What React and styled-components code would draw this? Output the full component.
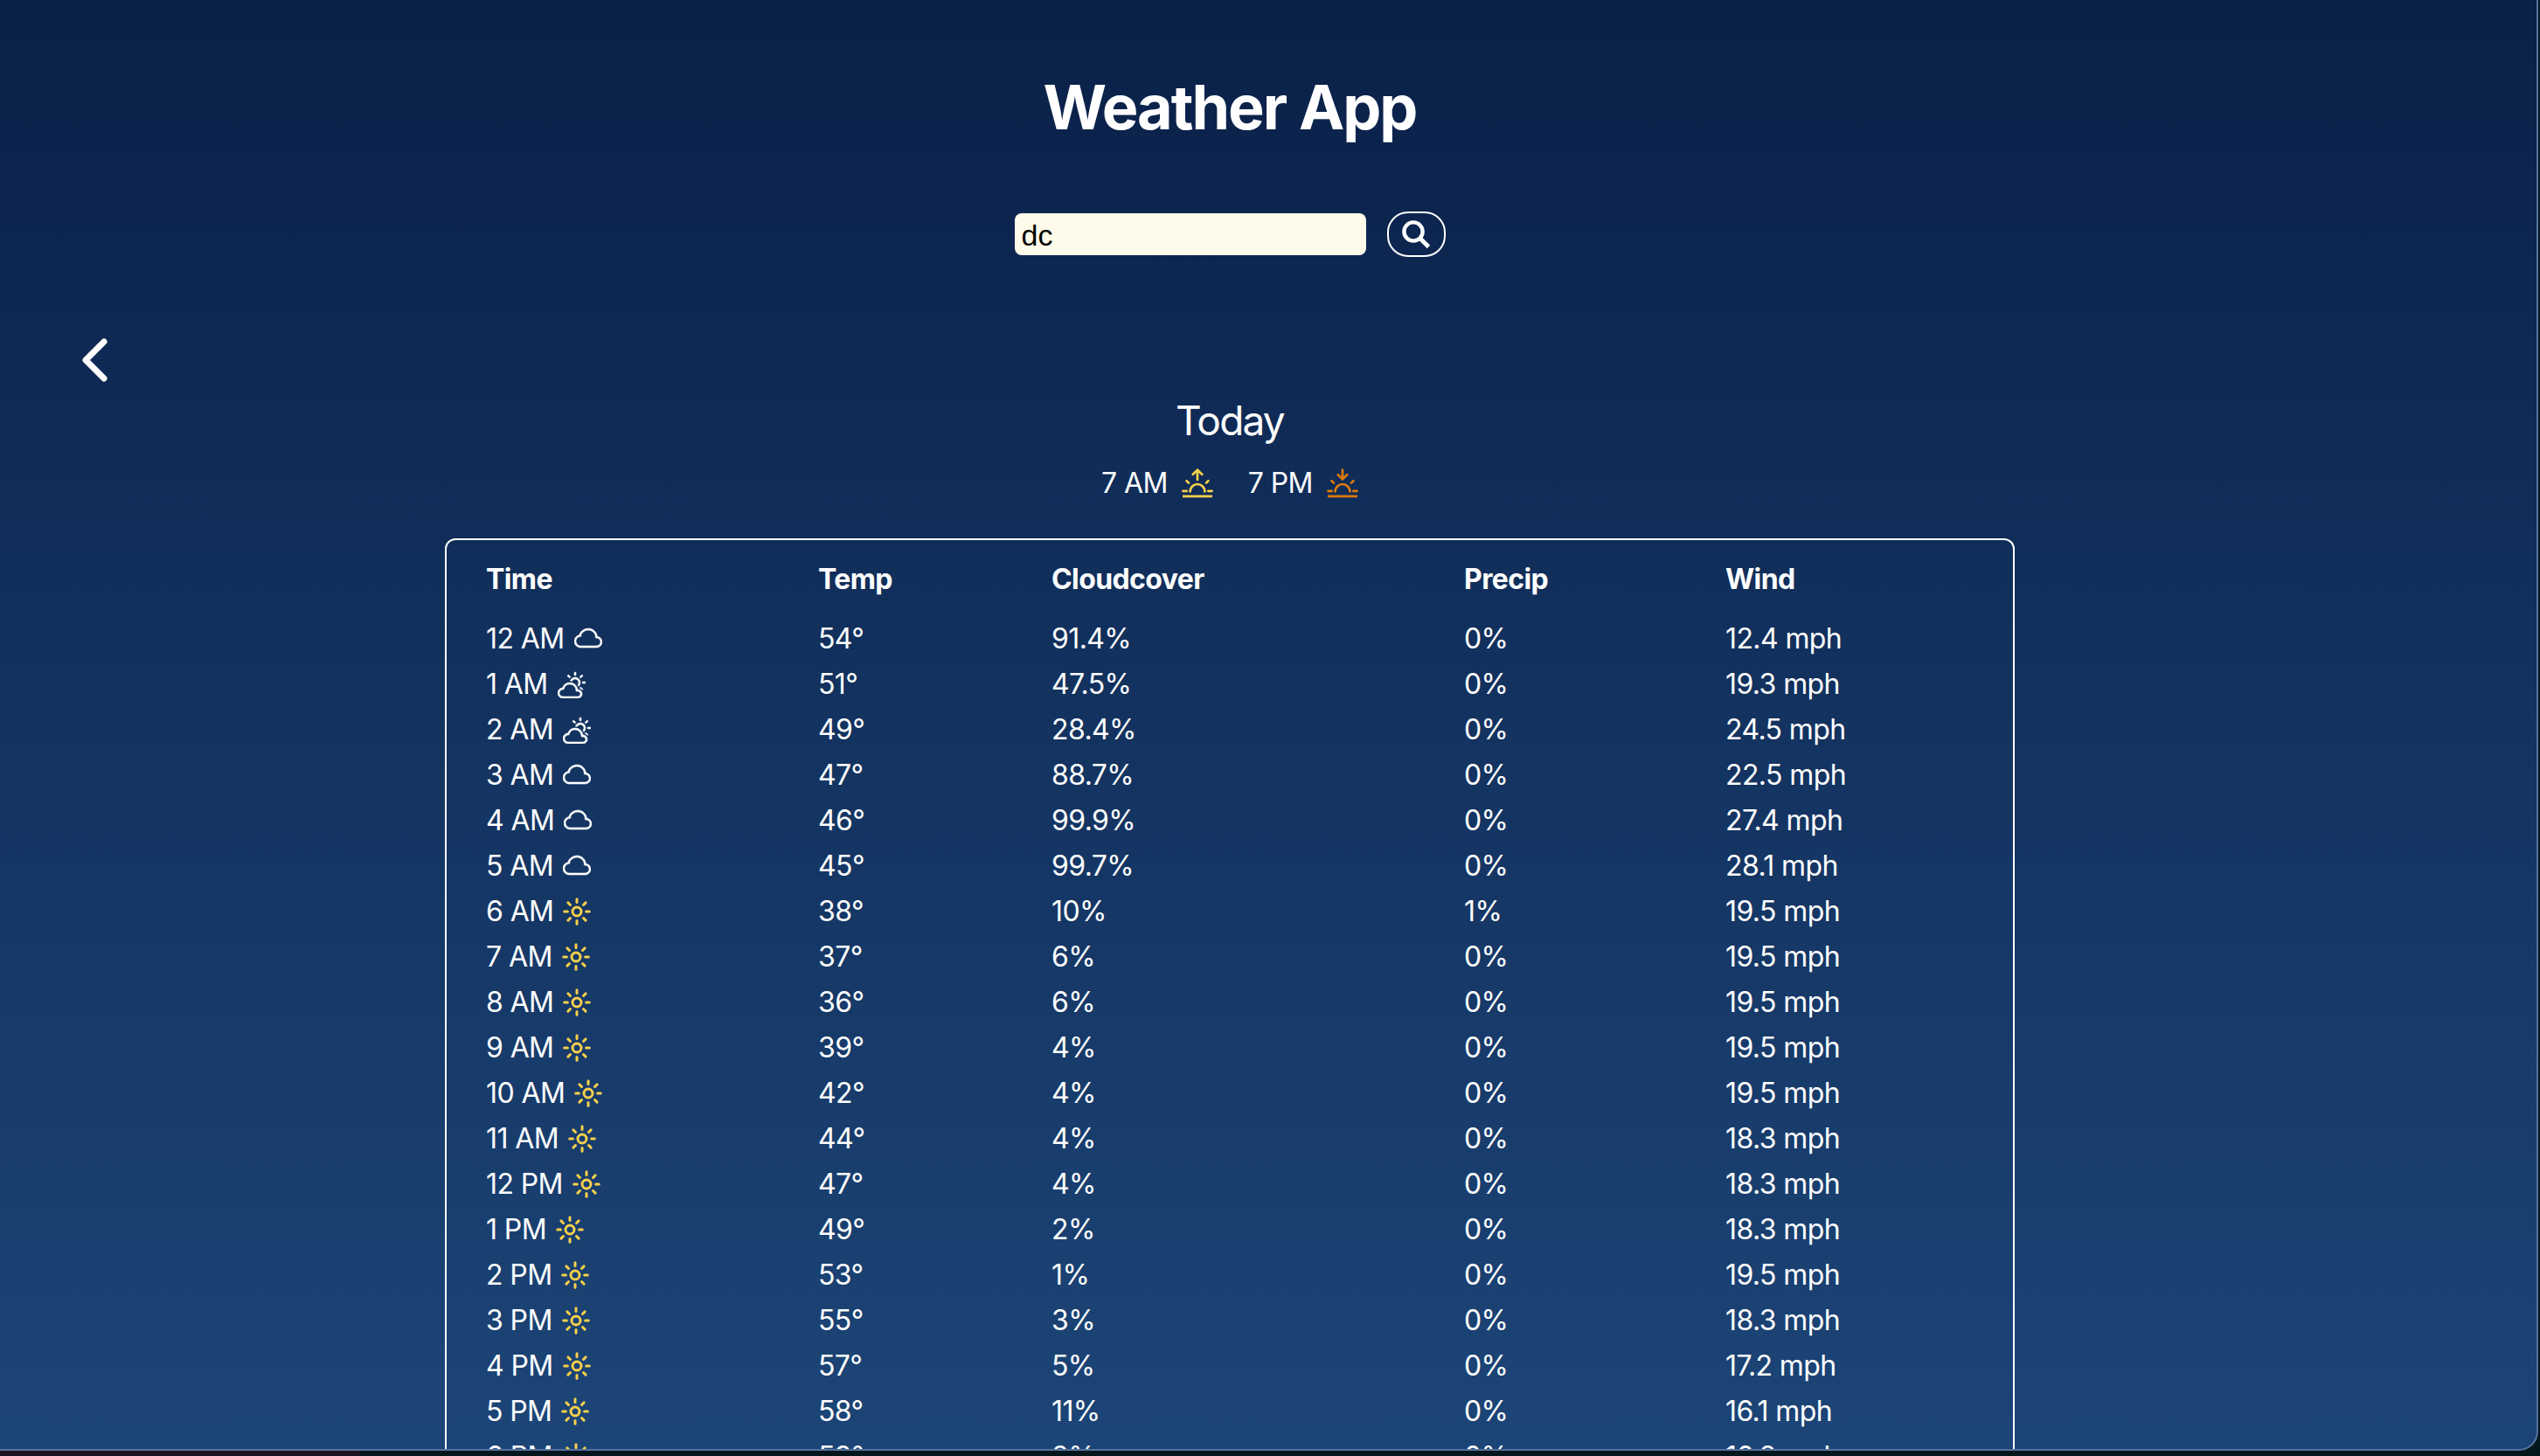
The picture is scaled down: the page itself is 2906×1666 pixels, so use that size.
import React from 'react'
import styled, { createGlobalStyle } from 'styled-components'
import { BsCloud, BsCloudSun } from 'react-icons/bs'

const GlobalStyle = createGlobalStyle`
  html, body {
    margin: 0;
    height: 100%;
    background: #02141c;
    overflow: hidden;
  }
`

const Desktop = styled.div`
  display: flex;
  flex-direction: column;
  width: 2906px;
  height: 1666px;
  background: linear-gradient(90deg, #1b1420 0, #1b1420 412px, #03161c 412px);
`

const Window = styled.div`
  box-sizing: border-box;
  width: 2904px;
  height: 1660px;
  overflow: hidden;
  color: #fff;
  font-family: Inter, "Liberation Sans", sans-serif;
  letter-spacing: -0.6px;
  background: linear-gradient(180deg, #0a2048 0, #1c4577 100%);
  border-right: 2px solid #56729f;
  border-bottom: 2px solid #56729f;
  border-radius: 0 0 22px 0;
`

const Header = styled.header`
  display: flex;
  flex-direction: column;
  align-items: center;
  padding: 81px 88px 0 0;
`

const Title = styled.h1`
  margin: 0;
  font-size: 70px;
  line-height: 84px;
  font-weight: 700;
  letter-spacing: -2px;
`

const SearchRow = styled.form`
  display: flex;
  align-items: center;
  gap: 24px;
  margin-top: 77px;
`

const SearchInput = styled.input`
  box-sizing: border-box;
  width: 402px;
  height: 48px;
  padding: 2px 8px 0;
  border: 0;
  border-radius: 8px;
  background: #fffbea;
  color: #000;
  font-family: "Liberation Sans", Arial, sans-serif;
  font-size: 34px;
`

const SearchButton = styled.button`
  display: flex;
  align-items: center;
  justify-content: center;
  box-sizing: border-box;
  width: 67px;
  height: 52px;
  padding: 0;
  border: 2px solid #fff;
  border-radius: 24px;
  background: transparent;
`

const BackButton = styled.button`
  display: block;
  margin: 90px 0 0 88px;
  padding: 0;
  width: 40px;
  height: 56px;
  border: 0;
  background: transparent;
`

const Forecast = styled.section`
  display: flex;
  flex-direction: column;
  align-items: center;
  margin-top: 13px;
  padding-right: 88px;
`

const DayName = styled.h2`
  margin: 0;
  font-size: 46px;
  line-height: 56px;
  font-weight: 400;
  letter-spacing: -1.8px;
`

const SunTimes = styled.div`
  display: flex;
  align-items: center;
  gap: 40px;
  margin-top: 24px;
  font-size: 32px;
  line-height: 40px;
`

const SunTime = styled.span`
  display: flex;
  align-items: center;
  gap: 16px;
`

const Table = styled.div`
  box-sizing: border-box;
  width: 1796px;
  margin-top: 43px;
  padding: 19px 45px 0;
  border: 2px solid #fff;
  border-radius: 12px;
`

const Row = styled.div`
  display: grid;
  grid-template-columns: 380px 267px 472px 299px 1fr;
  font-size: 32px;
  line-height: 52px;
  white-space: nowrap;
`

const HeadRow = styled(Row)`
  font-weight: 700;
  margin-bottom: 16px;
`

const TimeCell = styled.span`
  display: flex;
  align-items: center;
  gap: 11px;
`

const CloudIcon = styled.span`
  display: flex;
  color: #fff;

  svg {
    stroke: currentColor;
    stroke-width: 0.3;
  }
`

const SearchIcon = () => (
  <svg width="34" height="34" viewBox="0 0 34 34" fill="none" stroke="#fff" strokeWidth="4.4">
    <circle cx="14" cy="14" r="10.6" />
    <path d="M22 22l9.5 9.5" strokeWidth="5" />
  </svg>
)

const rayAngles = [0, 45, 90, 135, 180, 225, 270, 315]

const SunIcon = () => (
  <svg width="32" height="32" viewBox="0 0 32 32" fill="none" stroke="#f6cf4b" strokeWidth="3" strokeLinecap="round">
    <circle cx="16" cy="16" r="5" />
    {rayAngles.map(angle => (
      <line key={angle} x1="16" y1="5.4" x2="16" y2="1.7" transform={`rotate(${angle} 16 16)`} />
    ))}
  </svg>
)

const SunHorizon = ({ up, color }) => (
  <svg width="36" height="34" viewBox="0 0 36 34" fill="none" stroke={color} strokeWidth="2.7" strokeLinecap="round" strokeLinejoin="round">
    {up
      ? <path d="M18 13V1.6M12.8 6.8L18 1.6l5.2 5.2" />
      : <path d="M18 1.6V12.4M12.8 7.2l5.2 5.2 5.2-5.2" />}
    <path d="M5.6 14.2l2.4 2.4M30.4 14.2L28 16.6" />
    <path d="M9.6 26.4a8.4 8.4 0 0 1 16.8 0" />
    <path d="M1.4 25.8h4.4M30.2 25.8h4.4" />
    <path d="M1 31.8h34" strokeWidth="2.8" strokeLinecap="butt" />
  </svg>
)

const WeatherIcon = ({ kind }) => {
  if (kind === 'sun') return <SunIcon />
  const Icon = kind === 'part' ? BsCloudSun : BsCloud
  return <CloudIcon><Icon size={32} /></CloudIcon>
}

const hours = [
  ['12 AM', 'cloud', '54°', '91.4%', '0%', '12.4 mph'],
  ['1 AM', 'part', '51°', '47.5%', '0%', '19.3 mph'],
  ['2 AM', 'part', '49°', '28.4%', '0%', '24.5 mph'],
  ['3 AM', 'cloud', '47°', '88.7%', '0%', '22.5 mph'],
  ['4 AM', 'cloud', '46°', '99.9%', '0%', '27.4 mph'],
  ['5 AM', 'cloud', '45°', '99.7%', '0%', '28.1 mph'],
  ['6 AM', 'sun', '38°', '10%', '1%', '19.5 mph'],
  ['7 AM', 'sun', '37°', '6%', '0%', '19.5 mph'],
  ['8 AM', 'sun', '36°', '6%', '0%', '19.5 mph'],
  ['9 AM', 'sun', '39°', '4%', '0%', '19.5 mph'],
  ['10 AM', 'sun', '42°', '4%', '0%', '19.5 mph'],
  ['11 AM', 'sun', '44°', '4%', '0%', '18.3 mph'],
  ['12 PM', 'sun', '47°', '4%', '0%', '18.3 mph'],
  ['1 PM', 'sun', '49°', '2%', '0%', '18.3 mph'],
  ['2 PM', 'sun', '53°', '1%', '0%', '19.5 mph'],
  ['3 PM', 'sun', '55°', '3%', '0%', '18.3 mph'],
  ['4 PM', 'sun', '57°', '5%', '0%', '17.2 mph'],
  ['5 PM', 'sun', '58°', '11%', '0%', '16.1 mph'],
  ['6 PM', 'sun', '59°', '8%', '0%', '16.8 mph'],
]

const App = () => (
  <Desktop>
    <GlobalStyle />
    <Window>
      <Header>
        <Title>Weather App</Title>
        <SearchRow>
          <SearchInput defaultValue="dc" />
          <SearchButton type="button"><SearchIcon /></SearchButton>
        </SearchRow>
      </Header>
      <BackButton type="button">
        <svg width="40" height="56" viewBox="0 0 40 56" fill="none" stroke="#fff" strokeWidth="7" strokeLinecap="round" strokeLinejoin="round">
          <polyline points="31,7 10,28 31,49" />
        </svg>
      </BackButton>
      <Forecast>
        <DayName>Today</DayName>
        <SunTimes>
          <SunTime>7 AM <SunHorizon up color="#f6cf4b" /></SunTime>
          <SunTime>7 PM <SunHorizon color="#dc7a0c" /></SunTime>
        </SunTimes>
        <Table>
          <HeadRow>
            <span>Time</span>
            <span>Temp</span>
            <span>Cloudcover</span>
            <span>Precip</span>
            <span>Wind</span>
          </HeadRow>
          {hours.map(([time, kind, temp, cloud, precip, wind]) => (
            <Row key={time}>
              <TimeCell>{time} <WeatherIcon kind={kind} /></TimeCell>
              <span>{temp}</span>
              <span>{cloud}</span>
              <span>{precip}</span>
              <span>{wind}</span>
            </Row>
          ))}
        </Table>
      </Forecast>
    </Window>
  </Desktop>
)

export default App
